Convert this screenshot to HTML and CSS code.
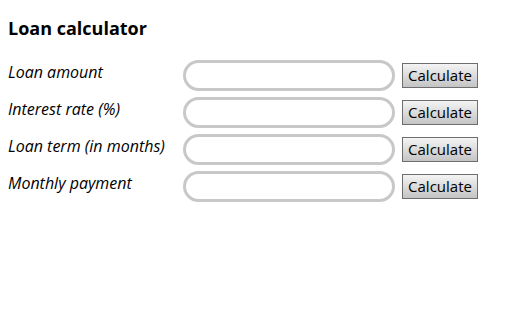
FILE: index.html
```html
<!DOCTYPE html>
<html>
<head>
<meta charset="utf-8">
<link rel="stylesheet" href="styles.css">
</head>
<body>
<h1 class="title">Loan calculator</h1>
<div class="form">
  <label class="label">Loan amount</label>
  <input class="field" type="text">
  <button class="btn">Calculate</button>
  <label class="label">Interest rate (%)</label>
  <input class="field" type="text">
  <button class="btn">Calculate</button>
  <label class="label">Loan term (in months)</label>
  <input class="field" type="text">
  <button class="btn">Calculate</button>
  <label class="label">Monthly payment</label>
  <input class="field" type="text">
  <button class="btn">Calculate</button>
</div>
</body>
</html>
```
FILE: styles.css
```css
html, body {
  margin: 0;
  padding: 0;
  background: #fff;
}
body {
  padding: 8px;
  font-family: "Open Sans", "DejaVu Sans", sans-serif;
  color: #000;
}
.title {
  font-size: 18px;
  font-weight: bold;
  margin: 8px 0 0 0;
  line-height: 24px;
}
.form {
  display: grid;
  grid-template-columns: 168px 212px 76px;
  column-gap: 7px;
  row-gap: 6px;
  align-items: center;
  margin-top: 20px;
}
.label {
  font-style: italic;
  font-size: 16px;
  line-height: 22px;
  align-self: start;
  margin-top: 1px;
  white-space: nowrap;
}
.field {
  box-sizing: border-box;
  width: 212px;
  height: 31px;
  border: 3px solid #c8c8c8;
  border-radius: 16px;
  background: #fff;
  margin: 0;
  padding: 0 10px;
  outline: none;
}
.btn {
  box-sizing: border-box;
  width: 76px;
  height: 25px;
  margin: 0;
  padding: 0;
  border: 1px solid #6e6e6e;
  border-radius: 0;
  background: linear-gradient(#f4f4f4, #c4c4c4);
  font-family: "Open Sans", "DejaVu Sans", sans-serif;
  font-size: 15px;
  line-height: 23px;
  color: #000;
}
```
